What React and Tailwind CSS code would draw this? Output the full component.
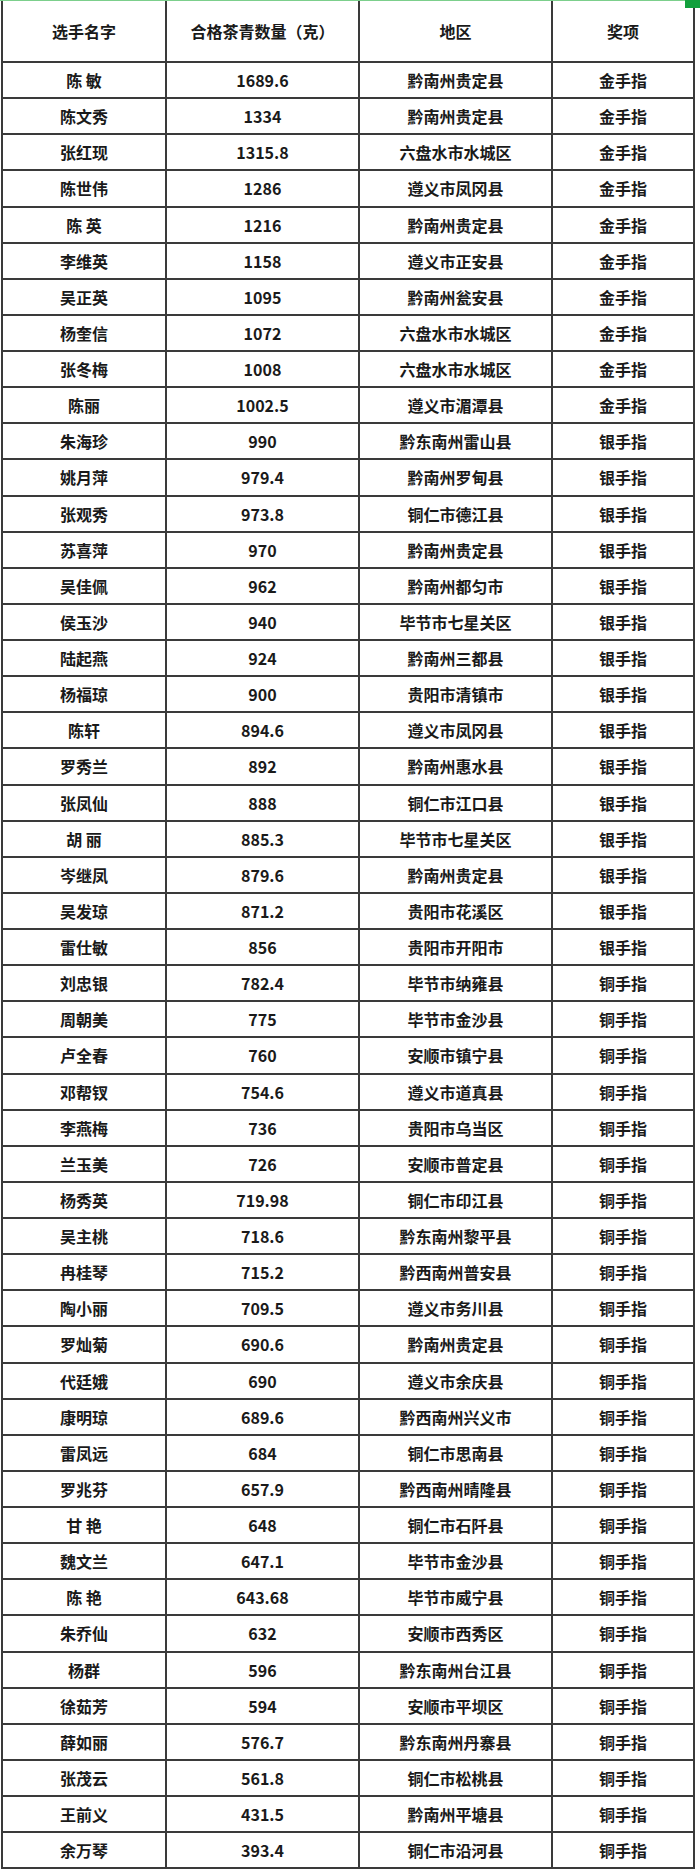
import React from 'react';

const rows = [
  ['陈 敏', '1689.6', '黔南州贵定县', '金手指'],
  ['陈文秀', '1334', '黔南州贵定县', '金手指'],
  ['张红现', '1315.8', '六盘水市水城区', '金手指'],
  ['陈世伟', '1286', '遵义市凤冈县', '金手指'],
  ['陈 英', '1216', '黔南州贵定县', '金手指'],
  ['李维英', '1158', '遵义市正安县', '金手指'],
  ['吴正英', '1095', '黔南州瓮安县', '金手指'],
  ['杨奎信', '1072', '六盘水市水城区', '金手指'],
  ['张冬梅', '1008', '六盘水市水城区', '金手指'],
  ['陈丽', '1002.5', '遵义市湄潭县', '金手指'],
  ['朱海珍', '990', '黔东南州雷山县', '银手指'],
  ['姚月萍', '979.4', '黔南州罗甸县', '银手指'],
  ['张观秀', '973.8', '铜仁市德江县', '银手指'],
  ['苏喜萍', '970', '黔南州贵定县', '银手指'],
  ['吴佳佩', '962', '黔南州都匀市', '银手指'],
  ['侯玉沙', '940', '毕节市七星关区', '银手指'],
  ['陆起燕', '924', '黔南州三都县', '银手指'],
  ['杨福琼', '900', '贵阳市清镇市', '银手指'],
  ['陈轩', '894.6', '遵义市凤冈县', '银手指'],
  ['罗秀兰', '892', '黔南州惠水县', '银手指'],
  ['张凤仙', '888', '铜仁市江口县', '银手指'],
  ['胡 丽', '885.3', '毕节市七星关区', '银手指'],
  ['岑继凤', '879.6', '黔南州贵定县', '银手指'],
  ['吴发琼', '871.2', '贵阳市花溪区', '银手指'],
  ['雷仕敏', '856', '贵阳市开阳市', '银手指'],
  ['刘忠银', '782.4', '毕节市纳雍县', '铜手指'],
  ['周朝美', '775', '毕节市金沙县', '铜手指'],
  ['卢全春', '760', '安顺市镇宁县', '铜手指'],
  ['邓帮钗', '754.6', '遵义市道真县', '铜手指'],
  ['李燕梅', '736', '贵阳市乌当区', '铜手指'],
  ['兰玉美', '726', '安顺市普定县', '铜手指'],
  ['杨秀英', '719.98', '铜仁市印江县', '铜手指'],
  ['吴主桃', '718.6', '黔东南州黎平县', '铜手指'],
  ['冉桂琴', '715.2', '黔西南州普安县', '铜手指'],
  ['陶小丽', '709.5', '遵义市务川县', '铜手指'],
  ['罗灿菊', '690.6', '黔南州贵定县', '铜手指'],
  ['代廷娥', '690', '遵义市余庆县', '铜手指'],
  ['康明琼', '689.6', '黔西南州兴义市', '铜手指'],
  ['雷凤远', '684', '铜仁市思南县', '铜手指'],
  ['罗兆芬', '657.9', '黔西南州晴隆县', '铜手指'],
  ['甘 艳', '648', '铜仁市石阡县', '铜手指'],
  ['魏文兰', '647.1', '毕节市金沙县', '铜手指'],
  ['陈 艳', '643.68', '毕节市威宁县', '铜手指'],
  ['朱乔仙', '632', '安顺市西秀区', '铜手指'],
  ['杨群', '596', '黔东南州台江县', '铜手指'],
  ['徐茹芳', '594', '安顺市平坝区', '铜手指'],
  ['薛如丽', '576.7', '黔东南州丹寨县', '铜手指'],
  ['张茂云', '561.8', '铜仁市松桃县', '铜手指'],
  ['王前义', '431.5', '黔南州平塘县', '铜手指'],
  ['余万琴', '393.4', '铜仁市沿河县', '铜手指'],
];

const headers = ['选手名字', '合格茶青数量（克）', '地区', '奖项'];

const Row = ({ cells, className }) => (
  <div className={`grid grid-cols-[164px_193px_193px_140px] border-b-2 border-[#3a3a3a] ${className}`}>
    {cells.map((c, i) => (
      <div
        key={i}
        className={`flex items-center justify-center whitespace-pre ${i < 3 ? 'border-r-2 border-[#3a3a3a]' : ''}`}
      >
        {c}
      </div>
    ))}
  </div>
);

export default function App() {
  return (
    <div className="relative w-[700px] h-[1870px] bg-white overflow-hidden font-['Noto_Sans_CJK_SC',sans-serif] text-[16px] font-bold text-[#1a1a1a]">
      <div className="h-px bg-[#7ccf8c]" />
      <div className="ml-px w-[694px] border-l-2 border-r-2 border-[#3a3a3a]">
        <Row cells={headers} className="h-[62px]" />
        {rows.map((r, i) => (
          <Row key={i} cells={r} className="h-[36.14px]" />
        ))}
      </div>
      {/* green tab in the corner */}
      <div className="absolute top-0 right-0 w-[15px] h-[8px] bg-[#12a03c]" />
    </div>
  );
}
